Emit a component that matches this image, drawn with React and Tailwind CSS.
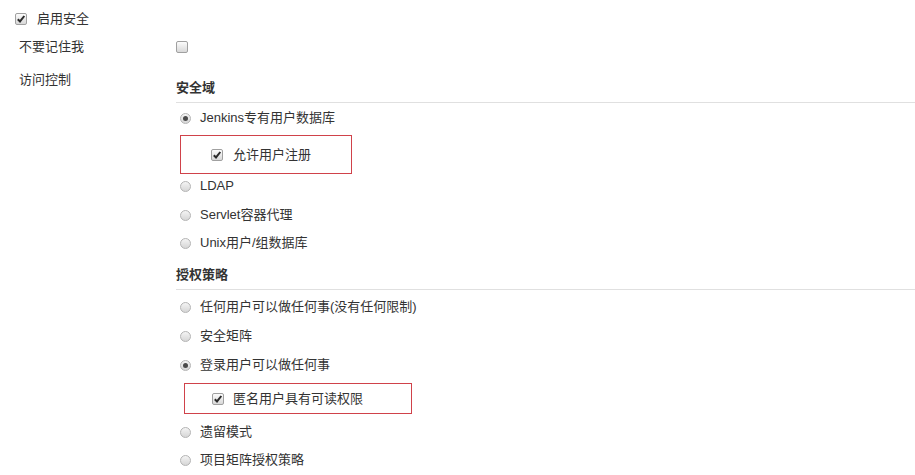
import React from 'react'

// Jenkins global security settings (configureSecurity), old-style form

const font = { fontFamily: '"Liberation Sans", "Noto Sans CJK SC", sans-serif' }

function Check({ checked }) {
  return (
    <span className="inline-flex h-[12px] w-[12px] shrink-0 items-center justify-center rounded-[2px] border border-[#a0a0a0] bg-gradient-to-b from-[#fcfcfc] to-[#d8d8d8]">
      {checked && (
        <svg width="10" height="10" viewBox="0 0 10 10">
          <path d="M1.8 5.2 L4 7.4 L8.3 2" fill="none" stroke="#2b2b2b" strokeWidth="2" />
        </svg>
      )}
    </span>
  )
}

function Radio({ checked }) {
  return (
    <span className="inline-flex h-[11px] w-[11px] shrink-0 items-center justify-center rounded-full border border-[#b4b4b4] bg-gradient-to-b from-[#f4f4f4] to-[#d6d6d6]">
      {checked && <span className="h-[5px] w-[5px] rounded-full bg-[#4a4a4a]" />}
    </span>
  )
}

function RadioRow({ label, checked, className = '' }) {
  return (
    <div className={`flex h-[20px] items-center pl-[4px] ${className}`}>
      <Radio checked={checked} />
      <span className="ml-[9px]">{label}</span>
    </div>
  )
}

function Section({ title, className = '' }) {
  return (
    <div className={`border-b border-[#e0e0e0] pb-[4px] font-bold leading-[20px] ${className}`}>
      {title}
    </div>
  )
}

export default function App() {
  return (
    <div className="min-h-[475px] w-[915px] bg-white pt-[10px] text-[13px] text-[#333]" style={font}>
      <div className="flex h-[18px] items-center pl-[15px]">
        <Check checked />
        <span className="ml-[10px]">启用安全</span>
      </div>

      <div className="mt-[5px] grid h-[28px] grid-cols-[176px_1fr] items-center">
        <span className="pl-[19px]">不要记住我</span>
        <Check />
      </div>

      <div className="mt-[5px] grid grid-cols-[176px_1fr]">
        <span className="mt-[4px] h-[20px] pl-[19px] leading-[20px]">访问控制</span>

        <div className="mt-[12px]">
          <Section title="安全域" />
          <RadioRow label="Jenkins专有用户数据库" checked className="mt-[5px]" />
          <div className="ml-[4px] mt-[7px] flex h-[39px] w-[172px] items-center border border-[#d0424a] pl-[30px]">
            <Check checked />
            <span className="ml-[10px]">允许用户注册</span>
          </div>
          <RadioRow label="LDAP" className="mt-[2px]" />
          <RadioRow label="Servlet容器代理" className="mt-[9px]" />
          <RadioRow label="Unix用户/组数据库" className="mt-[8px]" />

          <Section title="授权策略" className="mt-[12px]" />
          <RadioRow label="任何用户可以做任何事(没有任何限制)" className="mt-[7px]" />
          <RadioRow label="安全矩阵" className="mt-[9px]" />
          <RadioRow label="登录用户可以做任何事" checked className="mt-[9px]" />
          <div className="ml-[8px] mt-[8px] flex h-[31px] w-[228px] items-center border border-[#d0424a] pl-[27px]">
            <Check checked />
            <span className="ml-[9px]">匿名用户具有可读权限</span>
          </div>
          <RadioRow label="遗留模式" className="mt-[8px]" />
          <RadioRow label="项目矩阵授权策略" className="mt-[8px]" />
        </div>
      </div>
    </div>
  )
}
